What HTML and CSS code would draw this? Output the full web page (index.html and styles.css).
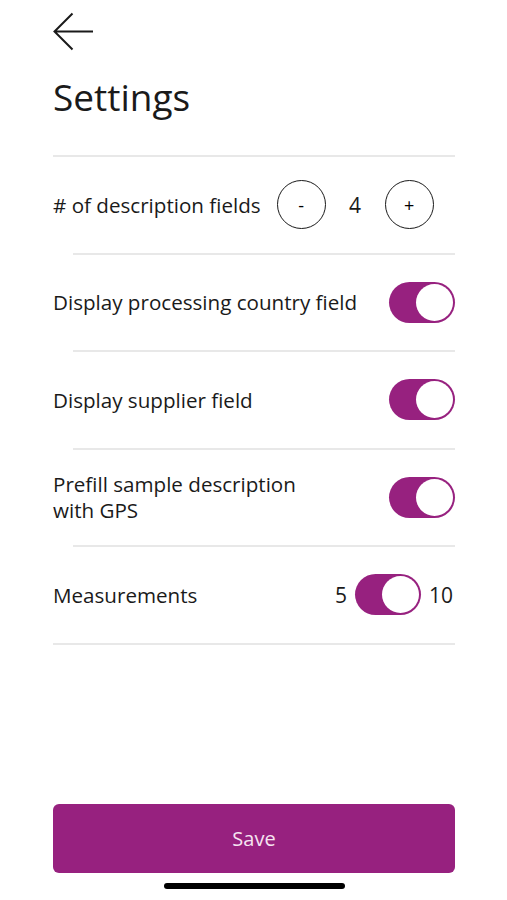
FILE: index.html
```html
<!DOCTYPE html>
<html>

<head>
    <title>Settings</title>
    <meta charset="utf-8" />
    <link rel="stylesheet" href="styles.css">
</head>

<body>
    <div id="page">
        <div id="header">
            <a id="backLink" href="#">
                <svg width="40" height="40" viewBox="0 0 40 40">
                    <path d="M40 19.5 H1.5 M19.5 1.5 L1.5 19.5 L19.5 37.5" fill="none" stroke="#1a1a1a" stroke-width="2" />
                </svg>
            </a>
            <h1 id="title">Settings</h1>
        </div>

        <div id="settingsList">
            <hr class="divider">
            <div class="row">
                <span class="label">#&nbsp;of description fields</span>
                <div class="stepper">
                    <button class="stepBtn" id="minusBtn">-</button>
                    <span class="stepValue" id="fieldCount">4</span>
                    <button class="stepBtn" id="plusBtn">+</button>
                </div>
            </div>
            <hr class="divider inset">
            <div class="row">
                <span class="label">Display processing country field</span>
                <div class="toggle on"><div class="knob"></div></div>
            </div>
            <hr class="divider inset">
            <div class="row">
                <span class="label">Display supplier field</span>
                <div class="toggle on"><div class="knob"></div></div>
            </div>
            <hr class="divider inset">
            <div class="row">
                <span class="label">Prefill sample description<br>with GPS</span>
                <div class="toggle on"><div class="knob"></div></div>
            </div>
            <hr class="divider inset">
            <div class="row">
                <span class="label">Measurements</span>
                <div class="choice">
                    <span class="choiceText">5</span>
                    <div class="toggle on"><div class="knob"></div></div>
                    <span class="choiceText">10</span>
                </div>
            </div>
            <hr class="divider">
        </div>

        <div id="footer">
            <button id="saveBtn">Save</button>
            <div id="homeBar"></div>
        </div>
    </div>

    <script>
        const fieldCount = document.getElementById('fieldCount');

        document.getElementById('minusBtn').addEventListener('click', () => {
            const n = parseInt(fieldCount.textContent);
            if (n > 1) fieldCount.textContent = n - 1;
        });

        document.getElementById('plusBtn').addEventListener('click', () => {
            fieldCount.textContent = parseInt(fieldCount.textContent) + 1;
        });

        // 点击开关切换状态
        document.querySelectorAll('.toggle').forEach((t) => {
            t.addEventListener('click', () => t.classList.toggle('on'));
        });
    </script>
</body>

</html>
```

FILE: styles.css
```css
body {
    margin: 0;
    padding: 0;
    font-family: "Open Sans", "Noto Sans", sans-serif;
    color: #1a1a1a;
    background-color: #fff;
}

#page {
    height: 900px;
    padding: 0 52px 0 53px;
    box-sizing: border-box;
    display: flex;
    flex-direction: column;
}

#header {
    padding-top: 12px;
}

#backLink {
    display: block;
    width: 40px;
    height: 40px;
}

#backLink svg {
    display: block;
}

#title {
    margin: 20px 0 0 0;
    font-size: 37px;
    font-weight: 400;
    line-height: 50px;
}

#settingsList {
    margin-top: 33px;
}

.divider {
    margin: 0;
    border: none;
    height: 2px;
    background-color: #e8e8e8;
}

.divider.inset {
    margin-left: 20px;
}

.row {
    height: 95.5px;
    display: flex;
    align-items: center;
    justify-content: space-between;
}

.label {
    font-size: 20.6px;
    line-height: 26px;
}

.stepper {
    display: flex;
    align-items: center;
    margin-right: auto;
    margin-left: 16px;
}

.stepBtn {
    width: 49px;
    height: 49px;
    border-radius: 50%;
    border: 1.5px solid #1a1a1a;
    background: #fff;
    font-family: inherit;
    font-size: 18px;
    color: #000;
    padding: 0;
}

.stepValue {
    width: 59px;
    text-align: center;
    font-size: 21px;
}

.toggle {
    width: 66px;
    height: 41px;
    border-radius: 21px;
    background-color: #ccc;
    padding: 2px;
    box-sizing: border-box;
    display: flex;
}

.toggle.on {
    background-color: #97217f;
    justify-content: flex-end;
}

.knob {
    width: 37px;
    height: 37px;
    border-radius: 50%;
    background-color: #fff;
}

.choice {
    display: flex;
    align-items: center;
    gap: 8px;
    margin-right: 2px;
}

.choiceText {
    font-size: 21px;
}

#footer {
    margin-top: auto;
    display: flex;
    flex-direction: column;
    align-items: center;
}

#saveBtn {
    width: 100%;
    height: 69px;
    border: none;
    border-radius: 6px;
    background-color: #97217f;
    color: #f6e4f1;
    font-family: inherit;
    font-size: 20px;
}

#homeBar {
    width: 181px;
    height: 6px;
    border-radius: 3px;
    background-color: #000;
    margin: 10px 0 11px 0;
}
```
